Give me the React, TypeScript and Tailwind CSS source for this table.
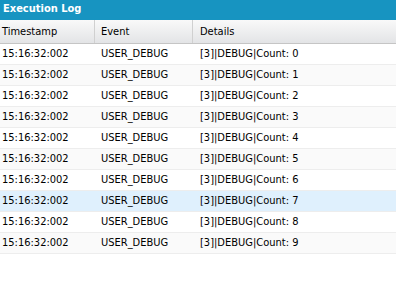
import React from "react";

const rows = Array.from({ length: 10 }, (_, i) => i);

export default function App() {
  return (
    <div
      className="w-[396px] h-[282px] bg-white overflow-hidden text-[11px] text-[#000]"
      style={{ fontFamily: '"DejaVu Sans Condensed", "DejaVu Sans", sans-serif', fontStretch: "condensed" }}
    >
      <div className="h-[20px] bg-[#1794c1] text-white font-bold text-[11px] leading-[18px] pl-[3px]">
        Execution Log
      </div>
      <div className="flex h-[24px] border-b border-[#c5c5c5] bg-gradient-to-b from-[#f9f9f9] to-[#e3e4e6] leading-[23px]">
        <div className="w-[95px] pl-[2px] border-r border-[#d0d0d0]">Timestamp</div>
        <div className="w-[98px] pl-[6px] border-r border-[#d0d0d0]">Event</div>
        <div className="flex-1 pl-[7px]">Details</div>
      </div>
      {rows.map((i) => (
        <div
          key={i}
          className={
            "flex h-[21px] border-b border-[#ededed] leading-[20px] " +
            (i === 7 ? "bg-[#dff0fd]" : i % 2 === 1 ? "bg-[#fafafa]" : "bg-white")
          }
        >
          <div className="w-[95px] pl-[2px]">15:16:32:002</div>
          <div className="w-[98px] pl-[6px]">USER_DEBUG</div>
          <div className="flex-1 pl-[7px]">[3]|DEBUG|Count: {i}</div>
        </div>
      ))}
    </div>
  );
}
